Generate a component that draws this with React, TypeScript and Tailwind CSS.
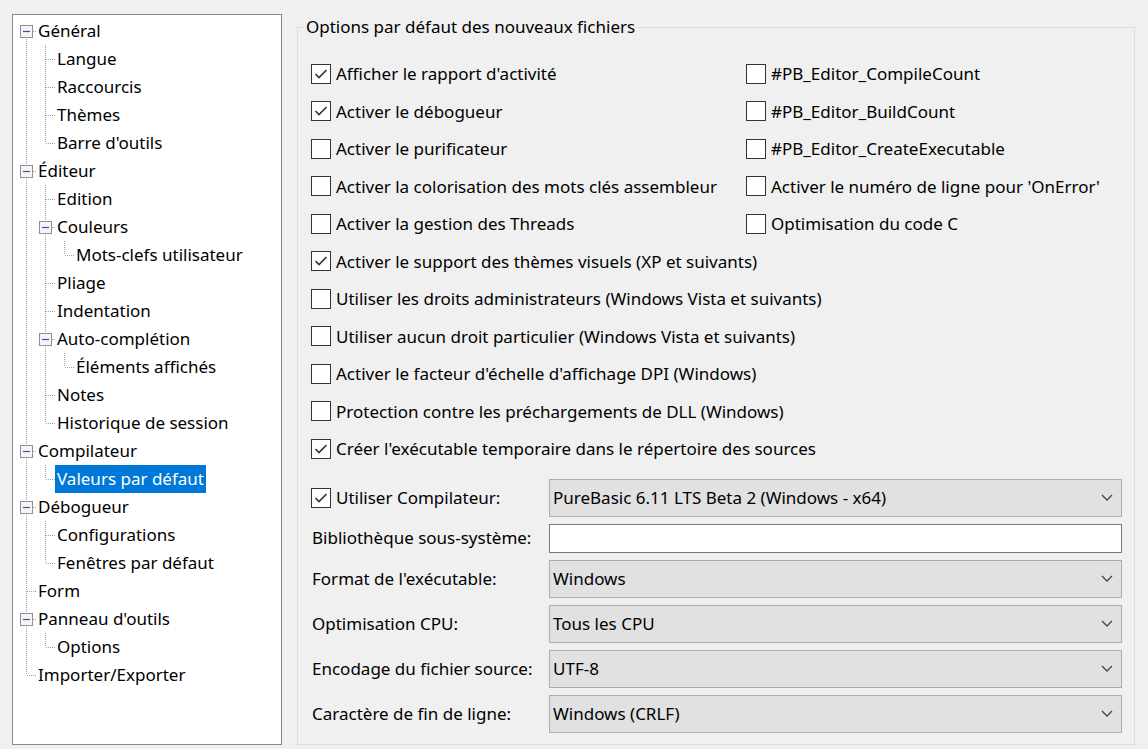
import React from "react";

type Node = { label: string; depth: number; kids?: boolean; last?: boolean; selected?: boolean };

const tree: Node[] = [
  { label: "Général", depth: 0, kids: true },
  { label: "Langue", depth: 1 },
  { label: "Raccourcis", depth: 1 },
  { label: "Thèmes", depth: 1 },
  { label: "Barre d'outils", depth: 1, last: true },
  { label: "Éditeur", depth: 0, kids: true },
  { label: "Edition", depth: 1 },
  { label: "Couleurs", depth: 1, kids: true },
  { label: "Mots-clefs utilisateur", depth: 2, last: true },
  { label: "Pliage", depth: 1 },
  { label: "Indentation", depth: 1 },
  { label: "Auto-complétion", depth: 1, kids: true },
  { label: "Éléments affichés", depth: 2, last: true },
  { label: "Notes", depth: 1 },
  { label: "Historique de session", depth: 1, last: true },
  { label: "Compilateur", depth: 0, kids: true },
  { label: "Valeurs par défaut", depth: 1, last: true, selected: true },
  { label: "Débogueur", depth: 0, kids: true },
  { label: "Configurations", depth: 1 },
  { label: "Fenêtres par défaut", depth: 1, last: true },
  { label: "Form", depth: 0 },
  { label: "Panneau d'outils", depth: 0, kids: true },
  { label: "Options", depth: 1, last: true },
  { label: "Importer/Exporter", depth: 0, last: true },
];

// which ancestor levels still have siblings below -> draw a pass-through line
function guides(i: number): boolean[] {
  const d = tree[i].depth;
  const out: boolean[] = [];
  for (let k = 0; k < d; k++) {
    let cont = false;
    for (let j = i - 1; j >= 0; j--) {
      if (tree[j].depth === k) {
        cont = !tree[j].last;
        break;
      }
    }
    out.push(cont);
  }
  return out;
}

const dot = { stroke: "#a0a0a0", strokeWidth: 1, strokeDasharray: "1 1" };

function Cell({ pass }: { pass: boolean }) {
  return (
    <svg width="19" height="28" className="shrink-0">
      {pass && <line x1="9.5" y1="0" x2="9.5" y2="28" {...dot} />}
    </svg>
  );
}

function Own({ node, first }: { node: Node; first: boolean }) {
  return (
    <svg width="19" height="28" className="shrink-0">
      {!first && <line x1="9.5" y1="0" x2="9.5" y2="14" {...dot} />}
      {!node.last && <line x1="9.5" y1="14" x2="9.5" y2="28" {...dot} />}
      <line x1="10" y1="14.5" x2="19" y2="14.5" {...dot} />
      {node.kids && (
        <g>
          <rect x="3.5" y="8.5" width="12" height="12" fill="#f4f4f4" stroke="#919191" />
          <line x1="6" y1="14.5" x2="13" y2="14.5" stroke="#2f55a0" strokeWidth="1.2" />
        </g>
      )}
    </svg>
  );
}

function Check({ on }: { on?: boolean }) {
  return (
    <span className="w-[20px] h-[20px] shrink-0 border border-[#333333] bg-white flex items-center justify-center">
      {on && (
        <svg width="14" height="12" viewBox="0 0 14 12">
          <polyline points="1.5,6 5,9.5 12.5,2" fill="none" stroke="#333333" strokeWidth="1.6" />
        </svg>
      )}
    </span>
  );
}

function CheckItem({ label, on, wide }: { label: string; on?: boolean; wide?: boolean }) {
  return (
    <div className={"flex items-center gap-[5px] h-[37.5px]" + (wide ? " col-span-2" : "")}>
      <Check on={on} />
      <span className="whitespace-nowrap">{label}</span>
    </div>
  );
}

function Combo({ value }: { value: string }) {
  return (
    <div className="h-[38px] bg-[#e1e1e1] border border-[#adadad] flex items-center justify-between pl-[3px] pr-[8px]">
      <span className="whitespace-nowrap">{value}</span>
      <svg width="12" height="7" viewBox="0 0 12 7">
        <polyline points="1,1 6,6 11,1" fill="none" stroke="#444444" strokeWidth="1.3" />
      </svg>
    </div>
  );
}

export default function App() {
  return (
    <div
      className="w-[1148px] h-[749px] bg-[#f0f0f0] flex text-black text-[17px] overflow-hidden"
      style={{ fontFamily: '"Noto Sans", "Liberation Sans", sans-serif' }}
    >
      <div className="ml-[12px] mt-[14px] w-[270px] h-[731px] border border-[#828790] bg-white pt-[2px] pl-[4px]">
        {tree.map((n, i) => (
          <div key={i} className="flex h-[28px] items-stretch">
            {guides(i).map((g, k) => (
              <Cell key={k} pass={g} />
            ))}
            <Own node={n} first={i === 0} />
            <span
              className={
                "px-[2px] leading-[28px] whitespace-nowrap " +
                (n.selected ? "bg-[#0078d7] text-white" : "")
              }
            >
              {n.label}
            </span>
          </div>
        ))}
      </div>

      <fieldset className="ml-[15px] mt-[15px] w-[838px] h-[730px] border border-[#dcdcdc] pl-[13px] pt-[16px]">
        <legend className="-ml-[7px] px-[2px] leading-[24px]">Options par défaut des nouveaux fichiers</legend>

        <div className="grid grid-cols-[435px_1fr]">
          <CheckItem label="Afficher le rapport d'activité" on />
          <CheckItem label="#PB_Editor_CompileCount" />
          <CheckItem label="Activer le débogueur" on />
          <CheckItem label="#PB_Editor_BuildCount" />
          <CheckItem label="Activer le purificateur" />
          <CheckItem label="#PB_Editor_CreateExecutable" />
          <CheckItem label="Activer la colorisation des mots clés assembleur" />
          <CheckItem label="Activer le numéro de ligne pour 'OnError'" />
          <CheckItem label="Activer la gestion des Threads" />
          <CheckItem label="Optimisation du code C" />
          <CheckItem label="Activer le support des thèmes visuels (XP et suivants)" on wide />
          <CheckItem label="Utiliser les droits administrateurs (Windows Vista et suivants)" wide />
          <CheckItem label="Utiliser aucun droit particulier (Windows Vista et suivants)" wide />
          <CheckItem label="Activer le facteur d'échelle d'affichage DPI (Windows)" wide />
          <CheckItem label="Protection contre les préchargements de DLL (Windows)" wide />
          <CheckItem label="Créer l'exécutable temporaire dans le répertoire des sources" on wide />
        </div>

        <div className="mt-[11px] grid grid-cols-[238px_573px] gap-y-[7px] items-center">
          <div className="flex items-center gap-[5px]">
            <Check on />
            <span>Utiliser Compilateur:</span>
          </div>
          <Combo value="PureBasic 6.11 LTS Beta 2 (Windows - x64)" />

          <span className="pl-[1px]">Bibliothèque sous-système:</span>
          <div className="h-[29px] bg-white border border-[#7a7a7a]" />

          <span className="pl-[1px]">Format de l'exécutable:</span>
          <Combo value="Windows" />

          <span className="pl-[1px]">Optimisation CPU:</span>
          <Combo value="Tous les CPU" />

          <span className="pl-[1px]">Encodage du fichier source:</span>
          <Combo value="UTF-8" />

          <span className="pl-[1px]">Caractère de fin de ligne:</span>
          <Combo value="Windows (CRLF)" />
        </div>
      </fieldset>
    </div>
  );
}
